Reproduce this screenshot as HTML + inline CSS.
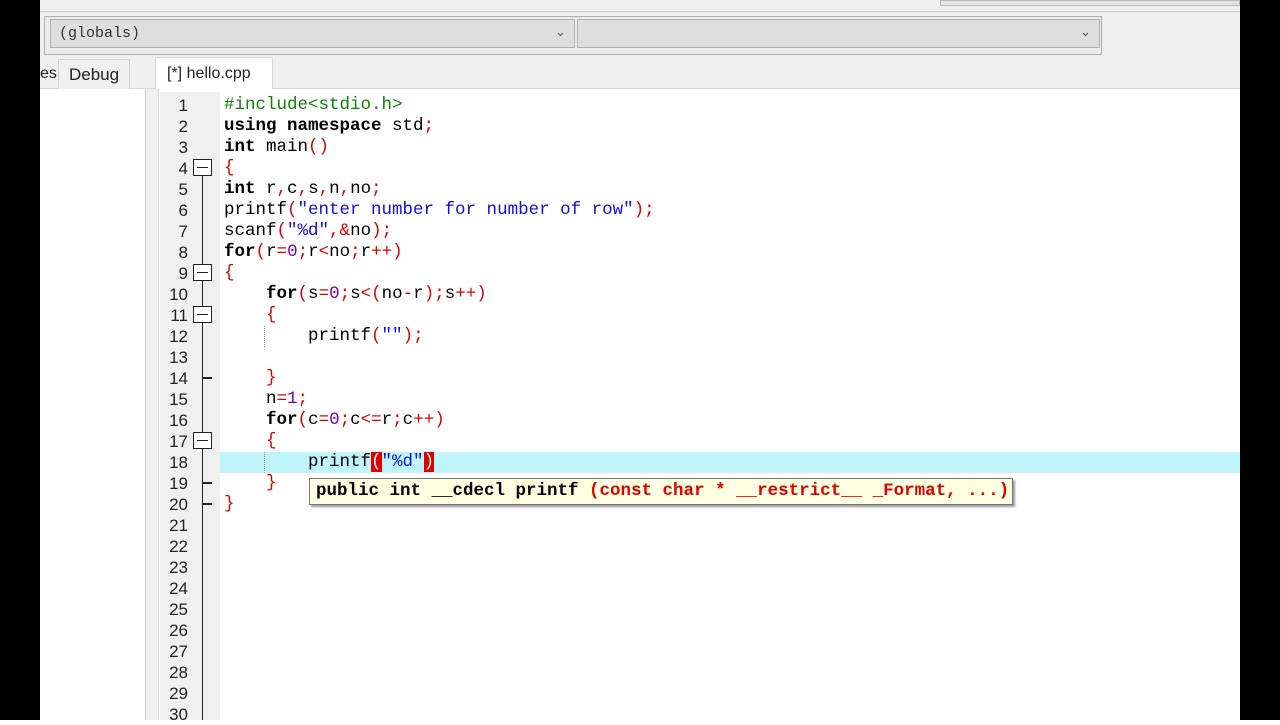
<!DOCTYPE html>
<html><head><meta charset="utf-8"><style>
*{margin:0;padding:0;box-sizing:border-box}
body{width:1280px;height:720px;overflow:hidden;background:#fff;position:relative;font-family:"Liberation Sans",sans-serif}
.abs{position:absolute}
.code{font-family:"Liberation Mono",monospace;font-size:17.5px;line-height:21px;white-space:pre}
.k{color:#000;font-weight:bold}.p{color:#e00000}.n{color:#8000a0}.s{color:#1010d0}.g{color:#108010}
.ln{position:absolute;left:158px;width:30px;text-align:right;font-family:"Liberation Sans",sans-serif;font-size:17px;line-height:21px;color:#222}
.fold{position:absolute;left:193px;width:19px;height:17px;border:1.5px solid #222;background:#fff}
.fold:after{content:"";position:absolute;left:3px;right:3px;top:6.5px;height:1.5px;background:#222}
.end{position:absolute;left:202px;width:10px;height:1.5px;background:#222}
</style></head><body>
<div class="abs" style="left:40px;top:0;width:1200px;height:12px;background:#efefef;border-bottom:1px solid #c8c8c8"></div>
<div class="abs" style="left:940px;top:0;width:300px;height:6px;background:#e2e2e2;border:1px solid #b8b8b8"></div>
<div class="abs" style="left:40px;top:12px;width:1200px;height:45px;background:#efefef"></div>
<div class="abs" style="left:44px;top:16px;width:1058px;height:39px;border:1px solid #b0b0b0;background:#ececec"></div>
<div class="abs" style="left:50px;top:19px;width:525px;height:29px;background:#dedede;border:1px solid #b0b0b0;font-family:'Liberation Mono',monospace;font-size:15px;line-height:27px;padding-left:8px;color:#333">(globals)</div>
<div class="abs" style="left:577px;top:19px;width:523px;height:29px;background:#dedede;border:1px solid #b0b0b0"></div>
<div class="abs" style="left:555px;top:24px;font-size:13px;color:#555">&#8964;</div>
<div class="abs" style="left:1080px;top:24px;font-size:13px;color:#555">&#8964;</div>
<div class="abs" style="left:40px;top:57px;width:1200px;height:32px;background:#efefef;border-bottom:1px solid #d8d8d8"></div>
<div class="abs" style="left:40px;top:65px;font-size:16px;color:#222">es</div>
<div class="abs" style="left:58px;top:59px;width:72px;height:30px;border:1px solid #d0d0d0;border-bottom:none;background:#efefef;font-size:17px;line-height:30px;padding-left:10px;color:#222">Debug</div>
<div class="abs" style="left:155px;top:57px;width:118px;height:33px;background:#fff;border:1px solid #d8d8d8;border-bottom:none;font-size:16px;line-height:31px;padding-left:11px;color:#222">[*] hello.cpp</div>
<div class="abs" style="left:40px;top:89px;width:106px;height:631px;background:#fff;border-right:1px solid #c8c8c8"></div>
<div class="abs" style="left:146px;top:89px;width:12px;height:631px;background:#f0f0f0"></div>
<div class="abs" style="left:158px;top:89px;width:1082px;height:631px;background:#fff;border-left:1px solid #d8d8d8"></div>
<div class="abs" style="left:160px;top:92px;width:60px;height:628px;background:#f0f0f0"></div>
<div class="abs" style="left:201.5px;top:176px;width:1.5px;height:544px;background:#222"></div>
<div class="abs" style="left:220px;top:452px;width:1020px;height:21px;background:#bff4fa"></div>
<div class="abs" style="left:0;top:0;width:40px;height:720px;background:#000"></div>
<div class="abs" style="left:1240px;top:0;width:40px;height:720px;background:#000"></div>

<div class="ln" style="top:95px">1<br>2<br>3<br>4<br>5<br>6<br>7<br>8<br>9<br>10<br>11<br>12<br>13<br>14<br>15<br>16<br>17<br>18<br>19<br>20<br>21<br>22<br>23<br>24<br>25<br>26<br>27<br>28<br>29<br>30</div>
<div class="fold" style="top:159px"></div>
<div class="fold" style="top:264px"></div>
<div class="fold" style="top:306px"></div>
<div class="fold" style="top:432px"></div>
<div class="end" style="top:377px"></div>
<div class="end" style="top:482px"></div>
<div class="end" style="top:503px"></div>
<div class="abs" style="left:264px;top:326px;border-left:1px dotted #999;height:21px"></div>
<div class="abs" style="left:264px;top:452px;border-left:1px dotted #999;height:21px"></div>

<div class="abs code" style="left:224px;top:95px"><span class="g">#include&lt;stdio.h&gt;</span>
<span class="k">using namespace</span> std<span class="p">;</span>
<span class="k">int</span> main<span class="p">()</span>
<span class="p">{</span>
<span class="k">int</span> r<span class="p">,</span>c<span class="p">,</span>s<span class="p">,</span>n<span class="p">,</span>no<span class="p">;</span>
printf<span class="p">(</span><span class="s">"enter number for number of row"</span><span class="p">);</span>
scanf<span class="p">(</span><span class="s">"%d"</span><span class="p">,&amp;</span>no<span class="p">);</span>
<span class="k">for</span><span class="p">(</span>r<span class="p">=</span><span class="n">0</span><span class="p">;</span>r<span class="p">&lt;</span>no<span class="p">;</span>r<span class="p">++)</span>
<span class="p">{</span>
    <span class="k">for</span><span class="p">(</span>s<span class="p">=</span><span class="n">0</span><span class="p">;</span>s<span class="p">&lt;(</span>no<span class="p">-</span>r<span class="p">);</span>s<span class="p">++)</span>
    <span class="p">{</span>
        printf<span class="p">(</span><span class="s">""</span><span class="p">);</span>

    <span class="p">}</span>
    n<span class="p">=</span><span class="n">1</span><span class="p">;</span>
    <span class="k">for</span><span class="p">(</span>c<span class="p">=</span><span class="n">0</span><span class="p">;</span>c<span class="p">&lt;=</span>r<span class="p">;</span>c<span class="p">++)</span>
    <span class="p">{</span>
        printf<span style="background:#e00000;color:#fff">(</span><span class="s">"%d"</span><span style="background:#e00000;color:#fff">)</span>
    <span class="p">}</span>
<span class="p">}</span></div>

<div class="abs code" style="left:309px;top:478px;width:704px;height:27px;background:#ffffe1;border:1px solid #777;box-shadow:2px 2px 2px #999;font-weight:bold;line-height:25px;padding-left:6px">public int __cdecl printf <span class="p">(const char * __restrict__ _Format, ...)</span></div>
</body></html>
